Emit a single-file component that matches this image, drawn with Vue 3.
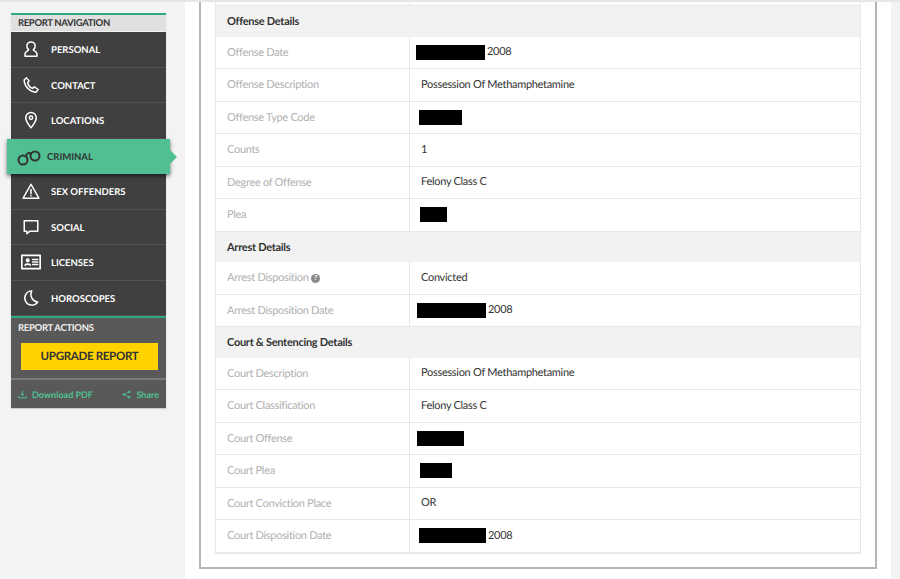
<template>
  <div class="page">
    <aside class="side">
      <div class="side-card">
        <div class="nav-head">REPORT NAVIGATION</div>
        <nav class="nav">
          <a v-for="item in navItems" :key="item.label" class="nav-item" :class="{ active: item.active }">
            <svg class="nav-icon" viewBox="0 0 24 24" fill="none" stroke="currentColor" stroke-width="2" stroke-linecap="round" stroke-linejoin="round" v-html="item.icon"></svg>
            <span>{{ item.label }}</span>
          </a>
        </nav>
        <div class="actions">
          <div class="actions-head">REPORT ACTIONS</div>
          <button class="upgrade">UPGRADE REPORT</button>
        </div>
        <div class="side-foot">
          <span class="foot-link">
            <svg viewBox="0 0 12 12" fill="none" stroke="currentColor" stroke-width="1.3"><path d="M6 1v6M3.8 5 6 7.4 8.2 5M1 8v2.5h10V8"/></svg>
            Download PDF
          </span>
          <span class="foot-link">
            <svg viewBox="0 0 12 12" fill="currentColor"><circle cx="2.5" cy="6" r="1.6"/><circle cx="9.5" cy="2.5" r="1.6"/><circle cx="9.5" cy="9.5" r="1.6"/><path d="M2.5 6l7-3.5M2.5 6l7 3.5" stroke="currentColor" stroke-width="1"/></svg>
            Share
          </span>
        </div>
      </div>
    </aside>

    <main class="main">
      <div class="panel">
        <div class="table">
          <div class="row stub"><div class="label"></div></div>
          <template v-for="section in sections" :key="section.title">
            <div class="section-title">{{ section.title }}</div>
            <div v-for="row in section.rows" :key="row.label" class="row">
              <div class="label">
                {{ row.label }}
                <span v-if="row.help" class="help">?</span>
              </div>
              <div class="value">
                <span v-if="row.redact" class="redact" :style="{ width: row.redact + 'px', marginLeft: row.offset + 'px' }"></span>
                {{ row.value }}
              </div>
            </div>
          </template>
        </div>
      </div>
    </main>
  </div>
</template>

<script setup>
const navItems = [
  { label: 'PERSONAL', icon: '<path d="M12 2.500a5.500 5.500 0 0 0-5.500 5.500c0 2.500 1.200 4.200 2.500 5 .3 1.500-5 2-5 5.500V21.500h16V18.500c0-3.500-5.300-4-5-5.500 1.300-.8 2.500-2.500 2.500-5A5.500 5.500 0 0 0 12 2.500z"/>' },
  { label: 'CONTACT', icon: '<path d="M6 2.500 3 5c-.5 8 7.500 17 16 16.500l2.500-3.500-5-3.500-2.500 2c-3-1-5.500-4-6.500-7.500l2-2.500z"/>' },
  { label: 'LOCATIONS', icon: '<path d="M12 22.500C8 17.500 5 13.500 5 9a7 7 0 0 1 14 0c0 4.500-3 8.500-7 13.500z"/><circle cx="12" cy="9" r="2.200"/>' },
  { label: 'CRIMINAL', active: true, icon: '<circle cx="6" cy="15" r="4.500"/><circle cx="18" cy="11" r="4.500"/><path d="M9 11c1-3 3-4 5-2" stroke-dasharray="2 1"/>' },
  { label: 'SEX OFFENDERS', icon: '<path d="M12 3 1.500 21.500h21z"/><path d="M12 10v5.500M12 18.300v.2"/>' },
  { label: 'SOCIAL', icon: '<path d="M3 3.500h18v14H10.500l-4 3.500v-3.500H3z"/>' },
  { label: 'LICENSES', icon: '<rect x="1" y="4" width="22" height="16"/><circle cx="8" cy="10" r="1.500" fill="currentColor"/><path d="M5 16c0-2 6-2 6 0M14 9h6M14 12h6M14 15h6"/>' },
  { label: 'HOROSCOPES', icon: '<path d="M13 2.500a9.500 9.500 0 1 0 8 15A10.500 10.500 0 0 1 13 2.500z"/>' },
]

const sections = [
  {
    title: 'Offense Details',
    rows: [
      { label: 'Offense Date', redact: 69, offset: -5, value: '2008' },
      { label: 'Offense Description', value: 'Possession Of Methamphetamine' },
      { label: 'Offense Type Code', redact: 43, offset: -2 },
      { label: 'Counts', value: '1' },
      { label: 'Degree of Offense', value: 'Felony Class C' },
      { label: 'Plea', redact: 27, offset: -1 },
    ],
  },
  {
    title: 'Arrest Details',
    rows: [
      { label: 'Arrest Disposition', help: true, value: 'Convicted' },
      { label: 'Arrest Disposition Date', redact: 69, offset: -4, value: '2008' },
    ],
  },
  {
    title: 'Court & Sentencing Details',
    rows: [
      { label: 'Court Description', value: 'Possession Of Methamphetamine' },
      { label: 'Court Classification', value: 'Felony Class C' },
      { label: 'Court Offense', redact: 47, offset: -4 },
      { label: 'Court Plea', redact: 32, offset: -1 },
      { label: 'Court Conviction Place', value: 'OR' },
      { label: 'Court Disposition Date', redact: 67, offset: -2, value: '2008' },
    ],
  },
]
</script>

<style scoped>
.page {
  display: flex;
  height: 579px;
  box-sizing: border-box;
  overflow: hidden;
  background: #f3f3f3;
  border-top: 2px solid #e6e6e6;
  font-family: Lato, "Liberation Sans", sans-serif;
  text-rendering: geometricPrecision;
}
.side {
  width: 185px;
  flex: none;
  padding: 11px 0 0 11px;
  box-sizing: border-box;
}
.side-card {
  width: 155px;
  background: #404040;
  box-shadow: 0 1px 1px rgba(0, 0, 0, 0.15);
}
.nav-head {
  height: 16px;
  border-top: 2px solid #2faa7b;
  background: #e0e0e0;
  color: #333;
  font-size: 9.5px;
  line-height: 18px;
  padding-left: 7px;
  font-weight: 700;
  letter-spacing: -0.35px;
  border-bottom: 1px solid #f3f3f3;
}
.nav {
  padding-top: 0.3px;
}
.nav-item {
  height: 35.5px;
  box-sizing: border-box;
  display: flex;
  align-items: center;
  padding-top: 2px;
  padding-left: 40px;
  position: relative;
  color: #fff;
  font-size: 9.5px;
  font-weight: 700;
  border-bottom: 1px solid #525252;
}
.nav-icon {
  position: absolute;
  left: 11px;
  top: 8px;
  width: 18px;
  height: 18px;
}
.nav-item:nth-child(7) .nav-icon {
  left: 10px;
  width: 20px;
  height: 20px;
  top: 7px;
}
.nav-item.active {
  margin: 0 -4px;
  padding-left: 40px;
  background: #50c092;
  color: #333;
  border-bottom: none;
  box-shadow: 0 2px 4px rgba(0, 0, 0, 0.55);
  z-index: 1;
}
.nav-item.active .nav-icon {
  left: 10px;
  top: 6px;
  width: 24px;
  height: 24px;
}
.nav-item.active::after {
  content: "";
  position: absolute;
  left: 100%;
  top: 11px;
  border-left: 7px solid #50c092;
  border-top: 7px solid transparent;
  border-bottom: 7px solid transparent;
}
.actions {
  background: #595959;
  border-top: 2px solid #2faa7b;
  padding: 5px 8px 8px 7px;
}
.actions-head {
  color: #f0f0f0;
  font-size: 9.5px;
  font-weight: 700;
  line-height: 12px;
  letter-spacing: -0.3px;
}
.upgrade {
  display: block;
  margin: 8px 0 0 3px;
  width: 137px;
  height: 27px;
  padding: 0;
  border: none;
  background: #ffd200;
  color: #333;
  font: 700 11.5px Lato, "Liberation Sans", sans-serif;
  letter-spacing: -0.3px;
  text-rendering: geometricPrecision;
}
.side-foot {
  display: flex;
  justify-content: space-between;
  align-items: center;
  height: 30px;
  box-sizing: border-box;
  padding: 0 7px;
  background: #595959;
  border-top: 2px solid #7a7a7a;
  color: #50c092;
  font-size: 9px;
  font-weight: 700;
}
.foot-link {
  display: flex;
  align-items: center;
  gap: 5px;
}
.foot-link svg {
  width: 9px;
  height: 9px;
}
.main {
  width: 706px;
  flex: none;
  background: #fff;
  padding: 0 14px;
  box-sizing: border-box;
}
.panel {
  height: 567px;
  box-sizing: border-box;
  padding: 0 14px;
  border: 2px solid #b5b5b5;
  border-top: none;
}
.table {
  border: 1px solid #e8e8e8;
  border-top: none;
}
.section-title {
  height: 30.5px;
  box-sizing: border-box;
  background: #f2f2f2;
  color: #333;
  font-size: 11px;
  font-weight: 700;
  line-height: 31px;
  letter-spacing: -0.28px;
  padding-left: 11px;
}
.row {
  height: 32.5px;
  box-sizing: border-box;
  display: flex;
  border-bottom: 1px solid #e8e8e8;
  font-size: 11px;
  line-height: 32px;
  letter-spacing: -0.3px;
}
.row.stub {
  height: 4px;
}
.label {
  width: 194px;
  flex: none;
  padding-left: 11px;
  box-sizing: border-box;
  color: #b0b0b0;
  border-right: 1px solid #e8e8e8;
}
.value {
  padding-left: 11px;
  color: #333;
  display: flex;
  align-items: center;
  gap: 2px;
}
.redact {
  display: inline-block;
  height: 15px;
  background: #000;
}
.help {
  display: inline-block;
  width: 9px;
  height: 9px;
  border-radius: 50%;
  background: #8a8a8a;
  color: #fff;
  font-size: 7px;
  font-weight: 700;
  line-height: 9px;
  text-align: center;
  vertical-align: 1px;
}
</style>

<style>
body {
  margin: 0;
}
</style>
